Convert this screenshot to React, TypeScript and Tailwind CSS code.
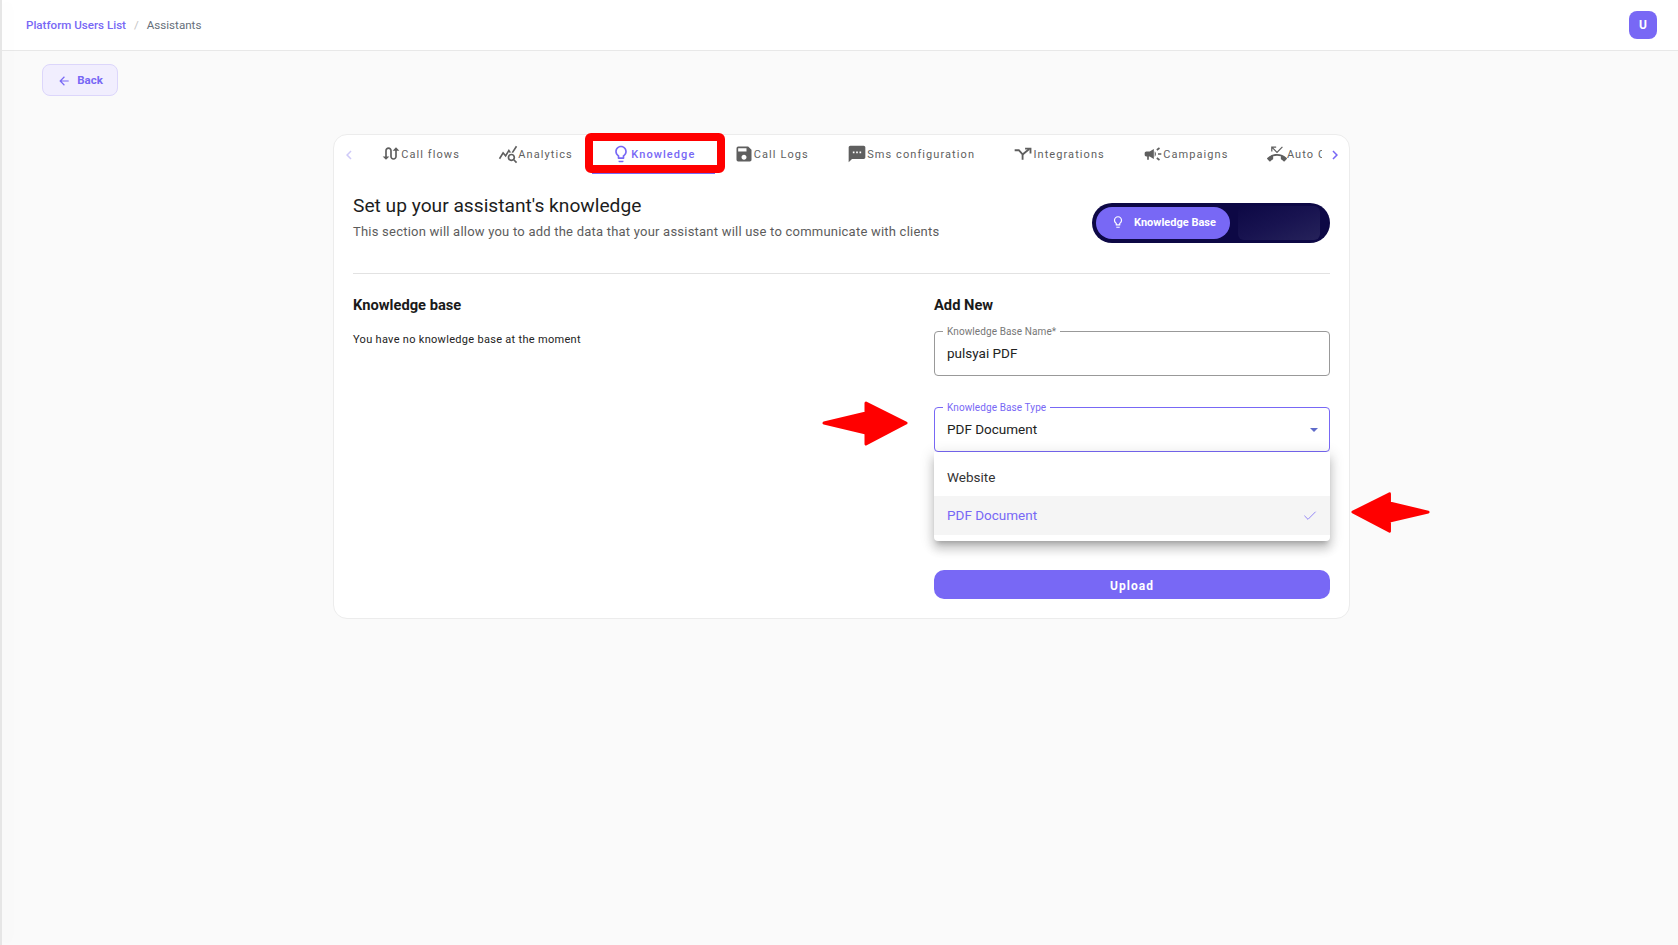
import type { ReactNode } from "react";
import { Check } from "lucide-react";
import { MdArrowBack, MdCampaign, MdChevronLeft, MdChevronRight, MdOutlineLightbulb, MdPhoneMissed, MdQueryStats, MdSave, MdSms, MdSwapCalls } from "react-icons/md";

function SplitIcon() {
  return (
    <svg viewBox="0 0 24 24" className="h-[20px] w-[20px]" fill="none" stroke="currentColor" strokeWidth="2.2">
      <path d="M2 7.5h5l4.5 5V19" />
      <path d="M11.5 12.5 19.5 6" />
      <path d="M14.5 5.5h6.5v6" />
    </svg>
  );
}

const tabs: { label: string; icon: ReactNode; active?: boolean }[] = [
  { label: "Call flows", icon: <MdSwapCalls className="h-[20px] w-[20px]" /> },
  { label: "Analytics", icon: <MdQueryStats className="h-[20px] w-[20px]" /> },
  { label: "Knowledge", icon: <MdOutlineLightbulb className="h-[20px] w-[20px]" />, active: true },
  { label: "Call Logs", icon: <MdSave className="h-[20px] w-[20px]" /> },
  { label: "Sms configuration", icon: <MdSms className="h-[20px] w-[20px]" /> },
  { label: "Integrations", icon: <SplitIcon /> },
  { label: "Campaigns", icon: <MdCampaign className="h-[20px] w-[20px]" /> },
  { label: "Auto Call", icon: <MdPhoneMissed className="h-[20px] w-[20px]" /> },
];

function Arrow({ className, flip }: { className: string; flip?: boolean }) {
  return (
    <svg viewBox="0 0 86 45" className={className}>
      <polygon
        points={flip ? "84,22 42,12 42,2 2,22 42,43 42,32" : "2,22 44,12 44,2 84,22 44,43 44,32"}
        fill="#ff0000"
        stroke="#ff0000"
        strokeWidth="3"
        strokeLinejoin="round"
      />
    </svg>
  );
}

export default function App() {
  return (
    <div className="flex min-h-[945px] bg-[#fafafa] font-['Roboto',sans-serif]">
      <div className="relative z-10 w-[2px] shrink-0 bg-[#e6e6e6] shadow-[6px_0_14px_rgba(0,0,0,0.05)]" />
      <div className="min-w-0 flex-1">
        <header className="flex h-[51px] items-center justify-between border-b border-[#e8e8e8] bg-white pl-[24px] pr-[21px]">
          <div className="flex items-center pt-[1px] text-[11.6px]">
            <span className="font-medium text-[#7868f5]">Platform Users List</span>
            <span className="mx-[8px] text-[#c4c4c4]">/</span>
            <span className="text-[#666f7a]">Assistants</span>
          </div>
          <div className="flex h-[28px] w-[28px] items-center justify-center rounded-[8px] bg-[#7868f5] text-[12px] font-bold text-white">U</div>
        </header>

        <div className="pl-[40px] pt-[13px]">
          <button className="flex h-[32px] w-[76px] items-center justify-center gap-[6px] rounded-[8px] border border-[#dcd6fb] bg-[#f1eefe] pt-[1px] text-[11.5px] font-bold text-[#7868f5]">
            <MdArrowBack className="h-[14px] w-[14px]" />
            Back
          </button>
        </div>

        <main className="ml-[331px] mt-[38px] w-[1017px] rounded-[14px] border border-[#ececec] bg-white">
          <div className="flex h-[39px] items-center">
            <MdChevronLeft className="ml-[6px] h-[18px] w-[18px] shrink-0 text-[#cfcaf8]" />
            <div className="ml-[4px] flex h-full w-[960px] shrink-0 overflow-hidden text-[11px] font-normal tracking-[1.08px] text-[#5f5f5f]">
              {tabs.map((t) => (
                <div key={t.label} className={`relative flex h-full shrink-0 items-center px-[19.2px] ${t.active ? "font-medium text-[#7868f5]" : ""}`}>
                  <span className="mb-[2px] shrink-0">{t.icon}</span>
                  <span className="mt-[2px] whitespace-nowrap">{t.label}</span>
                  {t.active && <span className="absolute inset-x-0 top-[38px] h-[1px] bg-[#7868f5]" />}
                </div>
              ))}
            </div>
            <MdChevronRight className="ml-[4px] h-[18px] w-[18px] shrink-0 text-[#7868f5]" />
          </div>

          <div className="pb-[19px] pl-[19px] pr-[19px]">
            <div className="mt-[29px] flex h-[40px] items-start justify-between">
              <div className="mt-[-9px]">
                <h1 className="text-[19.2px] leading-[24px] text-[#1d1d1d]">Set up your assistant's knowledge</h1>
                <p className="mt-[4px] text-[13px] leading-[20px] tracking-[0.22px] text-[#5c5c5c]">
                  This section will allow you to add the data that your assistant will use to communicate with clients
                </p>
              </div>
              <div className="flex h-[40px] w-[238px] items-center justify-between rounded-full bg-[#0d0845] pl-[4px] pr-[10px]">
                <div className="flex h-[32px] w-[134px] items-center gap-[9px] rounded-full bg-[#7868f5] pl-[15px] pt-[1px] text-[11px] font-bold text-white">
                  <MdOutlineLightbulb className="mt-[-4px] h-[14px] w-[14px]" />
                  Knowledge Base
                </div>
                <div className="h-[34px] w-[82px] rounded-[6px] bg-gradient-to-br from-[#0d0845] via-[#181350] to-[#26225a]" />
              </div>
            </div>

            <div className="mt-[30px] border-t border-[#e2e2e2]" />

            <div className="mt-[21px] flex items-start justify-between">
              <div>
                <h2 className="text-[14.7px] font-bold leading-[20px] text-[#1a1a1a]">Knowledge base</h2>
                <p className="mt-[16px] text-[11px] leading-[18px] tracking-[0.3px] text-[#222]">You have no knowledge base at the moment</p>
              </div>

              <div className="w-[396px]">
                <h2 className="text-[14.7px] font-bold leading-[20px] text-[#1a1a1a]">Add New</h2>

                <div className="relative mt-[16px] flex h-[45px] items-center rounded-[4px] border border-[#999] px-[12px] text-[13.5px] text-[#222]">
                  <span className="absolute left-[8px] top-[-6px] bg-white px-[4px] text-[10px] leading-[12px] tracking-[0.1px] text-[#777]">Knowledge Base Name*</span>
                  pulsyai PDF
                </div>

                <div className="relative mt-[31px] flex h-[45px] items-center justify-between rounded-[4px] border border-[#7868f5] pl-[12px] pr-[11px] text-[13.5px] text-[#222]">
                  <span className="absolute left-[8px] top-[-6px] bg-white px-[4px] text-[10px] leading-[12px] tracking-[0.1px] text-[#7868f5]">Knowledge Base Type</span>
                  PDF Document
                  <span className="h-0 w-0 border-x-[4px] border-t-[4px] border-x-transparent border-t-[#5f6bc9]" />
                  <Arrow className="absolute left-[-113px] top-[-7px] h-[45px] w-[86px]" />
                  <Arrow flip className="absolute left-[416px] top-[82px] h-[45px] w-[79px]" />
                  <div className="absolute left-[-1px] top-[44px] z-10 h-[89px] w-[396px] rounded-b-[4px] bg-white pt-[6px] shadow-[0_5px_5px_-3px_rgba(0,0,0,0.2),0_8px_10px_1px_rgba(0,0,0,0.14),0_3px_14px_2px_rgba(0,0,0,0.12)]">
                    <div className="flex h-[38px] items-center px-[13px] text-[#333]">Website</div>
                    <div className="flex h-[39px] items-center justify-between bg-[#f5f5f5] pl-[13px] pr-[12px] text-[#7868f5]">
                      PDF Document
                      <Check className="h-[16px] w-[16px]" strokeWidth={1.2} />
                    </div>
                  </div>
                </div>

                <button className="mt-[118px] flex h-[29px] w-full items-center justify-center rounded-[10px] bg-[#7868f5] pt-[2px] text-[12px] font-bold tracking-[1px] text-white">Upload</button>
              </div>
            </div>
          </div>
        </main>
      </div>

      {/* annotation box drawn over the active tab */}
      <div className="pointer-events-none absolute left-[585px] top-[133px] h-[40px] w-[140px] rounded-[6px] border-[8px] border-[#ff0000]" />
    </div>
  );
}
